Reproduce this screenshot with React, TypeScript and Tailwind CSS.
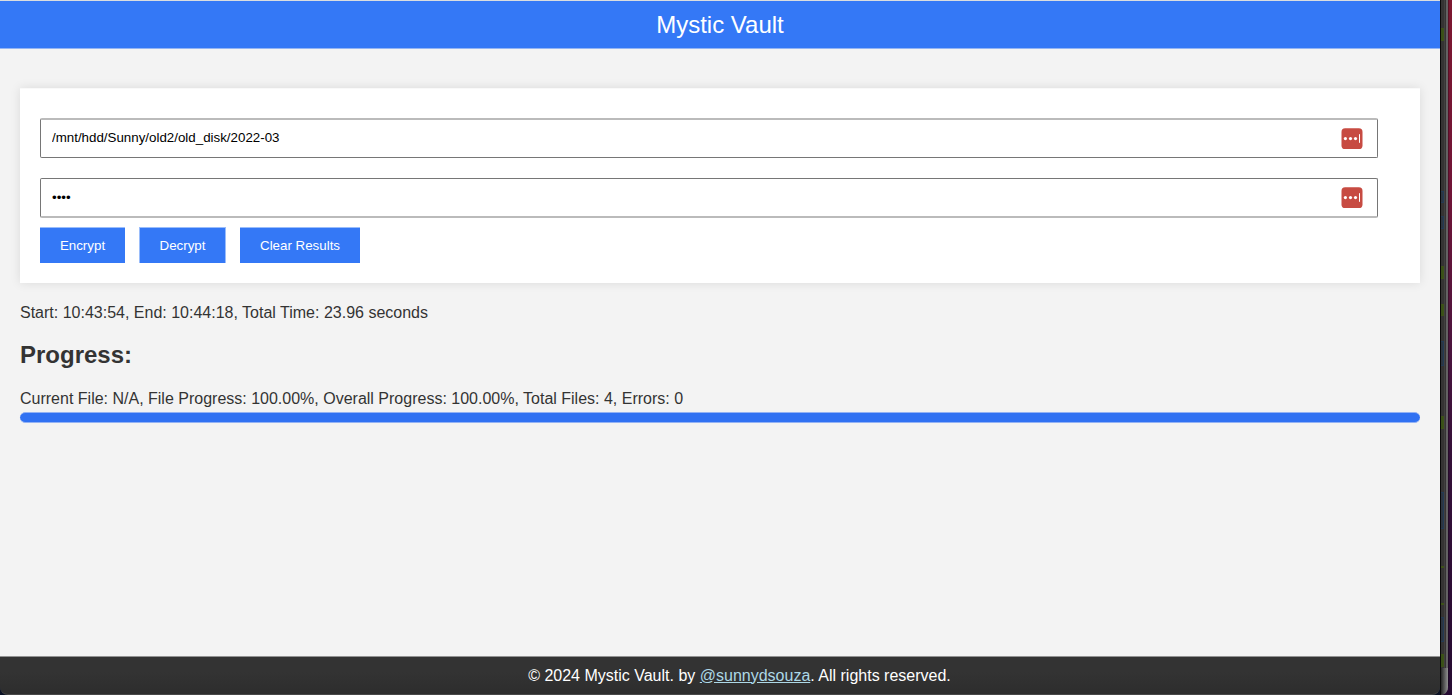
import type { ReactNode } from 'react';

function KeyIcon() {
  return (
    <svg className="h-[22px] w-[22px] shrink-0" viewBox="0 0 22 22">
      <rect x="0.5" y="0.3" width="21" height="20.7" rx="3.6" fill="#c74b42" />
      <circle cx="4.4" cy="10.6" r="1.6" fill="#fff" />
      <circle cx="9.5" cy="10.6" r="1.6" fill="#fff" />
      <circle cx="14.5" cy="10.6" r="1.6" fill="#fff" />
      <rect x="18" y="6.2" width="1" height="8.6" fill="#fff" />
    </svg>
  );
}

function Field({ type, value, label, edge, text }: { type: string; value: string; label: string; edge: string; text: string }) {
  return (
    <div className={`flex h-10 w-[1338px] items-center rounded-[2px] border border-[#767676] bg-white pr-[14px] pl-[11px] ${edge}`}>
      <input
        type={type}
        defaultValue={value}
        aria-label={label}
        className={`h-5 min-w-0 flex-1 bg-transparent text-[13.333px] leading-5 text-black outline-none ${text}`}
      />
      <KeyIcon />
    </div>
  );
}

function Button({ children, box }: { children: ReactNode; box: string }) {
  return (
    <button className={`h-9 border-t border-[#9abdfb] bg-[#3478f6] pb-px text-[13.333px] leading-[15px] text-white ${box}`}>
      {children}
    </button>
  );
}

const marks = [
  { y: 28, h: 13, blue: false },
  { y: 191, h: 12, blue: true },
  { y: 216, h: 13, blue: true },
  { y: 266, h: 13, blue: false },
  { y: 304, h: 12, blue: false },
  { y: 341, h: 25, blue: true },
  { y: 416, h: 13, blue: false },
  { y: 492, h: 37, blue: true },
  { y: 566, h: 2, blue: false },
  { y: 603, h: 2, blue: false },
  { y: 617, h: 25, blue: true },
  { y: 654, h: 13, blue: false },
];

function DesktopEdge() {
  return (
    <svg className="h-[695px] w-3 shrink-0" viewBox="0 0 12 695">
      <defs>
        <linearGradient id="wall" x1="0" y1="0" x2="0" y2="1">
          <stop offset="0" stopColor="#7d1730" />
          <stop offset="0.28" stopColor="#701437" />
          <stop offset="0.5" stopColor="#4b143e" />
          <stop offset="0.65" stopColor="#351039" />
          <stop offset="1" stopColor="#260b32" />
        </linearGradient>
        <linearGradient id="corner" x1="0" y1="0" x2="1" y2="0">
          <stop offset="0" stopColor="#161616" />
          <stop offset="1" stopColor="#909090" />
        </linearGradient>
      </defs>
      <rect width="12" height="695" fill="url(#wall)" />
      <path d="M0 0H8V687Q8 694 0 695Z" fill="#636263" />
      <rect width="6" height="668" fill="#353333" />
      <rect x="4" width="1" height="668" fill="#424040" />
      <path d="M0 668H8V687Q8 694 0 695Z" fill="url(#corner)" />
      {marks.map((m) => (
        <g key={m.y}>
          <rect x="1" y={m.y} width="3" height={m.h} fill={m.blue ? '#243a54' : '#3d5218'} />
          {m.h > 2 && <rect x="1" y={m.y + 1} width="2" height={m.h - 2} fill={m.blue ? '#2c3541' : '#395017'} />}
        </g>
      ))}
      <rect width="1" height="695" fill="#080808" />
      <rect x="8" width="1" height="686" fill="#000" opacity="0.25" />
    </svg>
  );
}

export default function App() {
  return (
    <div className="flex h-[695px] w-[1452px] overflow-hidden bg-[#0b1225] font-['Liberation_Sans',Arial,sans-serif] text-[#333]">
      <div className="flex w-[1440px] shrink-0 flex-col bg-[linear-gradient(to_bottom,#f3f3f3_670px,#0b1225_670px)]">
        <header className="flex h-[49px] shrink-0 items-center justify-center border-t border-b border-t-[#dadddf] border-b-[#94b5f4] bg-[#3478f6]">
          <h1 className="text-2xl leading-7 text-white">Mystic Vault</h1>
        </header>

        <main className="flex flex-1 flex-col px-5 pt-[39px]">
          <section className="flex h-[195px] flex-col border-t border-[#f9f9f9] bg-white px-5 pt-[29px] shadow-[0_0_10px_rgba(0,0,0,0.1)]">
            <Field
              type="text"
              value="/mnt/hdd/Sunny/old2/old_disk/2022-03"
              label="Folder"
              edge="border-t-2 border-t-[#bbb]"
              text="pb-0.5"
            />
            <div className="mt-5 flex">
              <Field type="password" value="2022" label="Password" edge="border-b-2 border-b-[#bbb]" text="pb-0" />
            </div>
            <div className="mt-[9px] flex">
              <Button box="w-[85px]">Encrypt</Button>
              <Button box="ml-[14px] w-[87px] border-x">Decrypt</Button>
              <Button box="ml-[14px] w-[120px]">Clear Results</Button>
            </div>
          </section>

          <p className="mt-[21px] text-base leading-[18px]">Start: 10:43:54, End: 10:44:18, Total Time: 23.96 seconds</p>
          <h2 className="mt-[19px] text-2xl leading-7 font-bold">Progress:</h2>
          <p className="mt-[21px] text-base leading-[18px]">
            Current File: N/A, File Progress: 100.00%, Overall Progress: 100.00%, Total Files: 4, Errors: 0
          </p>
          <div className="mt-1 h-[11px] rounded-full border-y border-[#93b2f4] bg-[#3071f2]" />
        </main>

        <footer className="flex h-[39px] shrink-0 items-center justify-center rounded-b-[8px] border-t border-b border-t-[#929292] border-b-[#484848] bg-[linear-gradient(to_bottom,#333_40%,#2d2d2d)] pl-[39px]">
          <p className="text-base leading-[18px] text-white">
            © 2024 Mystic Vault. by{' '}
            <a href="#" className="text-[#add8e6] underline">@sunnydsouza</a>. All rights reserved.
          </p>
        </footer>
      </div>
      <DesktopEdge />
    </div>
  );
}
